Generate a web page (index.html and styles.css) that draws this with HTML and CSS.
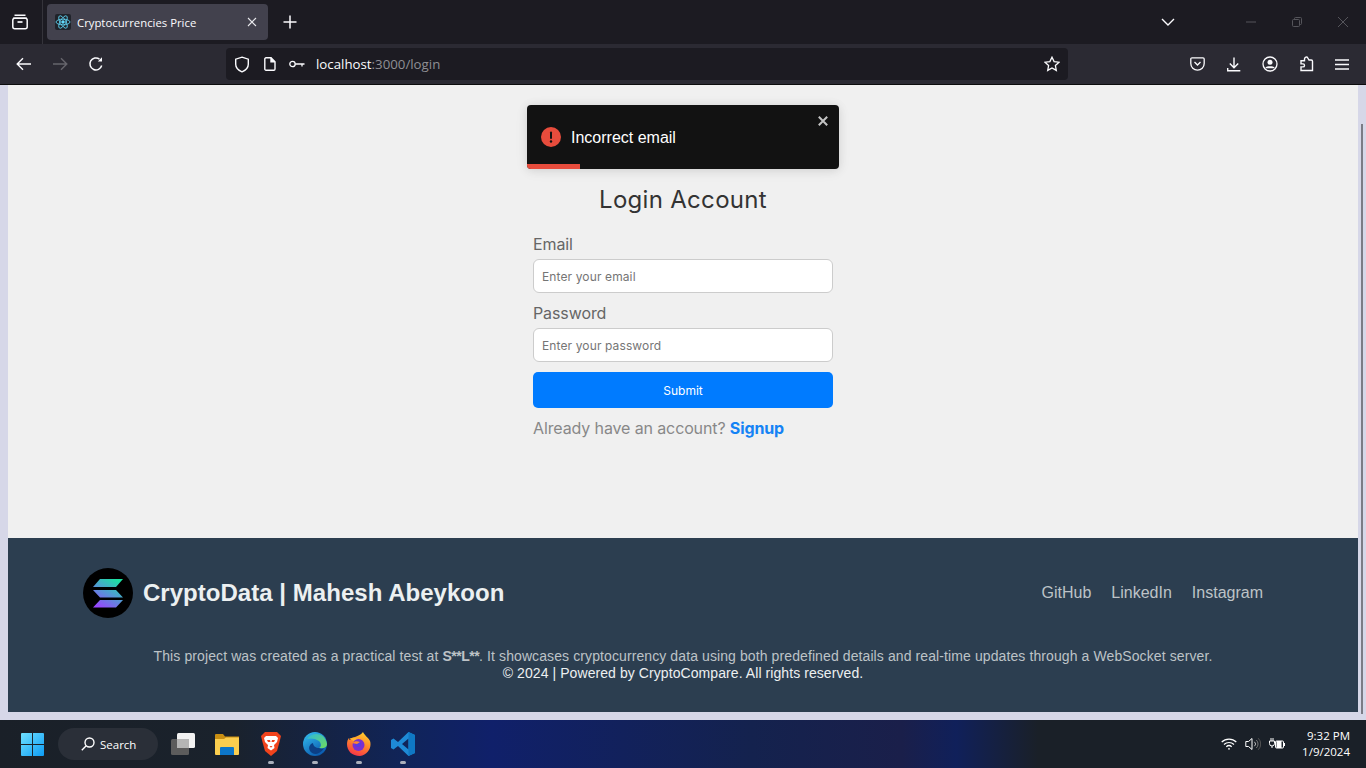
FILE: index.html
```html
<!DOCTYPE html>
<html lang="en">
<head>
<meta charset="utf-8">
<title>Cryptocurrencies Price</title>
<link rel="stylesheet" href="styles.css">
</head>
<body>
<header class="tabbar">
  <div class="tabs-btn">
    <svg width="18" height="18" viewBox="0 0 18 18" fill="none" stroke="#fbfbfe" stroke-width="1.5"><path d="M3.5 2.2h11M2 5.2h14"/><rect x="1.8" y="5.2" width="14.4" height="10.6" rx="2"/><path d="M6.5 9h5" stroke-width="1.7"/></svg>
  </div>
  <div class="tab">
    <span class="favicon">
      <svg width="16" height="16" viewBox="0 0 16 16" fill="none" stroke="#61dafb" stroke-width=".8"><ellipse cx="8" cy="8" rx="7" ry="2.8"/><ellipse cx="8" cy="8" rx="7" ry="2.8" transform="rotate(60 8 8)"/><ellipse cx="8" cy="8" rx="7" ry="2.8" transform="rotate(120 8 8)"/><circle cx="8" cy="8" r="1.3" fill="#61dafb"/></svg>
    </span>
    <span class="tab-title">Cryptocurrencies Price</span>
    <svg class="tab-close" width="10" height="10" viewBox="0 0 10 10" stroke="#e8e8ec" stroke-width="1.1"><path d="M1 1l8 8M9 1l-8 8"/></svg>
  </div>
  <svg class="new-tab" width="14" height="14" viewBox="0 0 14 14" stroke="#fbfbfe" stroke-width="1.5"><path d="M7 .5v13M.5 7h13"/></svg>
  <div class="spacer"></div>
  <svg class="list-tabs" width="14" height="8" viewBox="0 0 14 8" fill="none" stroke="#fbfbfe" stroke-width="1.4"><path d="M1 1l6 6 6-6"/></svg>
  <div class="win-btns">
    <svg width="10" height="10" viewBox="0 0 10 10" stroke="#55555b"><path d="M0 5h10"/></svg>
    <svg width="10" height="10" viewBox="0 0 10 10" fill="none" stroke="#55555b"><rect x=".5" y="2.5" width="7" height="7" rx="1"/><path d="M2.5 2.5V1.500a1 1 0 0 1 1-1h5a1 1 0 0 1 1 1v5a1 1 0 0 1-1 1h-1"/></svg>
    <svg width="10" height="10" viewBox="0 0 10 10" stroke="#55555b"><path d="M0 0l10 10M10 0L0 10"/></svg>
  </div>
</header>

<nav class="toolbar">
  <div class="nav-btns">
    <svg width="16" height="14" viewBox="0 0 16 14" fill="none" stroke="#fbfbfe" stroke-width="1.4"><path d="M15 7H1.500M7 1.200L1.200 7 7 12.800"/></svg>
    <svg width="16" height="14" viewBox="0 0 16 14" fill="none" stroke="#66656c" stroke-width="1.4"><path d="M1 7h13.500M9 1.200L14.800 7 9 12.800"/></svg>
    <svg width="16" height="16" viewBox="0 0 16 16" fill="none" stroke="#fbfbfe" stroke-width="1.5"><path d="M13.700 9.500A6 6 0 1 1 11.500 3.100"/><path d="M14 1.200v4.300H9.800" fill="#fbfbfe" stroke="none"/></svg>
  </div>
  <div class="urlbar">
    <svg class="u-shield" width="16" height="17" viewBox="0 0 16 17" fill="none" stroke="#fbfbfe" stroke-width="1.4"><path d="M8 1.200l6.300 2v5c0 3.700-3.200 6.300-6.300 7.600C4.900 14.500 1.700 11.900 1.700 8.200v-5z"/></svg>
    <svg class="u-page" width="12" height="14" viewBox="0 0 12 14" fill="none" stroke="#fbfbfe" stroke-width="1.4"><path d="M2 .8h5l4 4V12a1.200 1.200 0 0 1-1.200 1.200H2A1.200 1.200 0 0 1 .8 12V2A1.200 1.200 0 0 1 2 .8z"/><path d="M7 .8v4h4" fill="#fbfbfe"/></svg>
    <svg class="u-key" width="16" height="8" viewBox="0 0 16 8" fill="none" stroke="#fbfbfe" stroke-width="1.3"><circle cx="3.500" cy="4" r="2.700"/><path d="M6.200 4H15.500M13 4v2.500"/></svg>
    <span class="url"><span class="url-host">localhost</span>:3000/login</span>
    <svg class="u-star" width="16" height="16" viewBox="0 0 16 16" fill="none" stroke="#fbfbfe" stroke-width="1.3"><path d="M8 1.200l2.100 4.400 4.900.6-3.600 3.300.9 4.900L8 12l-4.300 2.400.9-4.900L1 6.200l4.900-.6z"/></svg>
  </div>
  <div class="tool-icons">
    <svg width="15" height="14" viewBox="0 0 15 14" fill="none" stroke="#fbfbfe" stroke-width="1.300"><path d="M2 .8h11A1.200 1.200 0 0 1 14.200 2v4.500a6.700 6.700 0 0 1-13.400 0V2A1.200 1.200 0 0 1 2 .8z"/><path d="M4.500 5l3 3 3-3"/></svg>
    <svg width="14" height="15" viewBox="0 0 14 15" fill="none" stroke="#fbfbfe" stroke-width="1.400"><path d="M7 .5v10M2.800 6.500L7 10.700l4.200-4.200M.7 11v2.800h12.600"/></svg>
    <svg width="16" height="16" viewBox="0 0 16 16" fill="none" stroke="#fbfbfe" stroke-width="1.300"><circle cx="8" cy="8" r="7"/><circle cx="8" cy="6.200" r="2.500" fill="#fbfbfe" stroke="none"/><path d="M3.500 11.500c1-1.700 8-1.700 9 0v.8h-9z" fill="#fbfbfe" stroke="none"/></svg>
    <svg width="14" height="16" viewBox="0 0 14 16" fill="none" stroke="#fbfbfe" stroke-width="1.400"><path d="M1 4.800h3.500V3a2 2 0 0 1 2.800-1.800L9 4h2.300a1.200 1.200 0 0 1 1.200 1.200v9.300H1v-3.600h2a1.500 1.500 0 0 0 0-3H1z"/></svg>
    <svg width="14" height="11" viewBox="0 0 14 11" stroke="#fbfbfe" stroke-width="1.300"><path d="M0 1h14M0 5.500h14M0 10h14"/></svg>
  </div>
</nav>

<div class="viewport">
  <div class="page">
    <main class="main">
      <div class="toast">
        <svg class="toast-icon" width="20" height="20" viewBox="0 0 20 20"><circle cx="10" cy="10" r="10" fill="#e74c3c"/><rect x="9" y="4.500" width="2" height="7.500" rx="1" fill="#121212"/><circle cx="10" cy="14.500" r="1.200" fill="#121212"/></svg>
        <span class="toast-text">Incorrect email</span>
        <svg class="toast-close" width="10" height="10" viewBox="0 0 10 10" stroke="#c4c4c4" stroke-width="2"><path d="M.8.800l8.400 8.400M9.200.800L.8 9.200"/></svg>
        <div class="toast-bar"></div>
      </div>
      <h1 class="title">Login Account</h1>
      <form class="form">
        <label class="label" for="email">Email</label>
        <input class="input" id="email" type="email" placeholder="Enter your email">
        <label class="label" for="password">Password</label>
        <input class="input" id="password" type="password" placeholder="Enter your password">
        <button class="submit" type="button">Submit</button>
      </form>
      <p class="already">Already have an account? <a class="signup" href="#">Signup</a></p>
    </main>
    <footer class="footer">
      <div class="foot-top">
        <div class="brand">
          <svg class="logo" width="50" height="50" viewBox="0 0 50 50">
            <defs><linearGradient id="sol" x1=".2" y1="1" x2=".8" y2="0"><stop offset="0" stop-color="#9945ff"/><stop offset=".5" stop-color="#5497d5"/><stop offset="1" stop-color="#19e3a0"/></linearGradient></defs>
            <circle cx="25" cy="25" r="25" fill="#000"/>
            <path fill="url(#sol)" d="M17 11h23l-7 8H10zM10 22h23l7 7.500H17zM17 32h23l-7 7.500H10z"/>
          </svg>
          <span class="brand-name">CryptoData | Mahesh Abeykoon</span>
        </div>
        <div class="links"><a href="#">GitHub</a><a href="#">LinkedIn</a><a href="#">Instagram</a></div>
      </div>
      <p class="desc">This project was created as a practical test at <strong>S**L**</strong>. It showcases cryptocurrency data using both predefined details and real-time updates through a WebSocket server.</p>
      <p class="copy">© 2024 | Powered by CryptoCompare. All rights reserved.</p>
    </footer>
  </div>
  <div class="scrollbar"><div class="thumb"></div></div>
</div>

<div class="taskbar">
  <svg class="start" width="23" height="23" viewBox="0 0 24 24">
    <defs><linearGradient id="win" x1="0" y1="0" x2="1" y2="1"><stop offset="0" stop-color="#6fe0ff"/><stop offset="1" stop-color="#0d9cf5"/></linearGradient></defs>
    <path fill="url(#win)" d="M0 1a1 1 0 0 1 1-1h10.500v11.500H0zM12.500 0H23a1 1 0 0 1 1 1v10.500H12.500zM0 12.500h11.500V24H1a1 1 0 0 1-1-1zM12.500 12.500H24V23a1 1 0 0 1-1 1H12.500z"/>
  </svg>
  <div class="search">
    <svg width="14" height="14" viewBox="0 0 14 14" fill="none" stroke="#fff" stroke-width="1.400"><circle cx="8.500" cy="5.500" r="4.500"/><path d="M5.200 8.800L.8 13.200"/></svg>
    <span>Search</span>
  </div>
  <div class="apps">
    <span class="app">
      <svg width="24" height="22" viewBox="0 0 24 22"><rect x="0" y="6" width="18" height="16" rx="1.500" fill="#5c5c5c"/><rect x="6" y="0" width="18" height="15" rx="1.500" fill="#f2f2f2"/><rect x="6" y="6" width="12" height="9" fill="#b5b5b5"/></svg>
    </span>
    <span class="app">
      <svg width="24" height="21" viewBox="0 0 24 21"><path d="M0 1a1 1 0 0 1 1-1h7l2 2.500h14V8H0z" fill="#c98f12"/><path d="M0 5h9l2-1.500h13V20a1 1 0 0 1-1 1H1a1 1 0 0 1-1-1z" fill="#fbce4f"/><path d="M5 14a1 1 0 0 1 1-1h12a1 1 0 0 1 1 1v7H5z" fill="#0c76c9"/></svg>
    </span>
    <span class="app on">
      <svg width="20" height="24" viewBox="0 0 20 24"><path d="M4 0h12l2 2 2 2-1.500 6-2.500 9-6 5-6-5-2.500-9L0 4l2-2z" fill="#f1431c"/><path d="M5 4h10l2 2-1 4-3 3 .5 3-3.500 2.500L6.500 16l.5-3-3-3-1-4z" fill="#fff"/><path d="M6 8h3l.5 2H7zM14 8h-3l-.5 2H13zM8.500 14h3L10 15.800z" fill="#f1431c"/></svg>
    </span>
    <span class="app on">
      <svg width="24" height="24" viewBox="0 0 24 24"><defs><linearGradient id="edge" x1="0" y1="0" x2=".6" y2="1"><stop offset="0" stop-color="#35c1f1"/><stop offset="1" stop-color="#0b5cb0"/></linearGradient><linearGradient id="edge2" x1="0" y1="0" x2="1" y2="1"><stop offset="0" stop-color="#2fb8d8"/><stop offset="1" stop-color="#6fdc5c"/></linearGradient></defs><circle cx="12" cy="12" r="12" fill="url(#edge)"/><path d="M4 7C8 0 22-1 24 12c0 4-5 5-8 4 2-1 3-4 0-7-4-3-9-3-12-2z" fill="url(#edge2)"/><path d="M16 16c-3 0-6-2-6-5-3 1-5 4-3 8 2 3 6 4 9 2 2-1 4-3 5-5-1 1-3 1-5 0z" fill="#0c3f85"/></svg>
    </span>
    <span class="app on">
      <svg width="24" height="24" viewBox="0 0 24 24"><defs><linearGradient id="fox" x1=".7" y1="0" x2=".3" y2="1"><stop offset="0" stop-color="#ffd02e"/><stop offset=".45" stop-color="#ff8a2a"/><stop offset="1" stop-color="#f5304a"/></linearGradient></defs><path d="M16 0c1 3 5 5 7 9 2 6-2 14-10 15C5 24 0 19 0 12c0-3 1-5 2-6 0 1 .5 2 1 2 1-2 3-3 5-3 2-1 6-2 8-5z" fill="url(#fox)"/><path d="M2 6c2 1 6-1 9 1l-3 3z" fill="#ffb52e"/><circle cx="11.500" cy="13" r="6" fill="#7a2fd0"/><circle cx="11" cy="12" r="3" fill="#5b3be0"/><path d="M5 11c3-2 5-2 8-1l-3 2z" fill="#ff8a2a"/></svg>
    </span>
    <span class="app on">
      <svg width="24" height="24" viewBox="0 0 24 24"><path d="M17.500 0L24 3v18l-6.500 3L7 14l-4.500 3.500L0 16V8l2.500-1.500L7 10zM17.500 6.500L11 12l6.500 5.500z" fill="#1e8ad6"/><path d="M17.500 0L24 3v18l-6.500 3z" fill="#0f78c4"/></svg>
    </span>
  </div>
  <div class="spacer"></div>
  <div class="tray">
    <svg width="16" height="12" viewBox="0 0 16 12" fill="none" stroke="#fff" stroke-width="1.200"><path d="M.7 4a10.500 10.500 0 0 1 14.600 0M3 6.500a7.200 7.200 0 0 1 10 0M5.300 8.800a3.900 3.900 0 0 1 5.400 0"/><circle cx="8" cy="10.800" r=".9" fill="#fff" stroke="none"/></svg>
    <svg width="16" height="14" viewBox="0 0 16 14" fill="none" stroke="#fff"><path d="M.8 4.500h2.700L7 1.500v11l-3.500-3H.8z"/><path d="M9.500 4.800a3 3 0 0 1 0 4.400" stroke="#bbb"/><path d="M11.300 3a5.500 5.500 0 0 1 0 8" stroke="#777"/><path d="M13.200 1.200a8 8 0 0 1 0 11.600" stroke="#555"/></svg>
    <svg width="16" height="12" viewBox="0 0 16 12" fill="none" stroke="#fff"><path d="M2 0v3M4 0v3M.5 3h5v2.500a2.500 2.500 0 0 1-5 0zM3 8v2"/><rect x="6.500" y="3" width="8" height="7" rx="1"/><rect x="7.500" y="3" width="5" height="7" fill="#fff" stroke="none"/><path d="M15.500 5v3"/></svg>
  </div>
  <div class="clock"><div>9:32 PM</div><div>1/9/2024</div></div>
</div>
</body>
</html>
```
FILE: styles.css
```css
* { box-sizing: border-box; }
html, body { margin: 0; height: 768px; overflow: hidden; }
body { display: flex; flex-direction: column; width: 1366px; font-family: "Inter", sans-serif; background: #d6d7e8; }
svg { display: block; flex: none; }
.spacer { flex: 1; }

.tabbar { height: 44px; flex: none; background: #1c1b22; display: flex; align-items: center; }
.tabs-btn { width: 43px; height: 44px; display: flex; align-items: center; padding-left: 11px; border-right: 1px solid #35343b; margin-right: 4px; }
.tab { width: 221px; height: 36px; background: #42414d; border-radius: 4px; display: flex; align-items: center; padding: 0 11px 0 8px; }
.favicon { width: 16px; height: 16px; background: #20232a; border-radius: 2px; margin-right: 6px; }
.tab-title { font: 11.330px "Open Sans", sans-serif; color: #fbfbfe; flex: 1; white-space: nowrap; }
.new-tab { margin-left: 15px; }
.list-tabs { margin-right: 71px; }
.win-btns { display: flex; gap: 36px; margin-right: 18px; }

.toolbar { height: 41px; flex: none; background: #2b2a33; border-bottom: 1px solid #0c0c0d; display: flex; align-items: center; }
.nav-btns { display: flex; align-items: center; gap: 20px; width: 226px; padding-left: 16px; }
.urlbar { width: 842px; height: 32px; background: #1c1b22; border-radius: 4px; display: flex; align-items: center; padding-left: 8px; padding-right: 8px; }
.u-page { margin-left: 14px; }
.u-key { margin-left: 13px; }
.url { font: 13.280px "Open Sans", sans-serif; color: #8f8f94; margin-left: 11px; flex: 1; }
.url-host { color: #fbfbfe; }
.tool-icons { display: flex; align-items: center; gap: 21.500px; margin-left: 122px; }

.viewport { height: 635px; flex: none; display: flex; padding-left: 8px; }
.page { width: 1350px; height: 627px; display: flex; flex-direction: column; }
.main { position: relative; height: 453px; flex: none; background: #f0f0f0; display: flex; flex-direction: column; align-items: center; padding-top: 100px; }
.scrollbar { width: 8px; flex: 1; padding: 39px 0 0 3px; }
.thumb { width: 2px; height: 590px; background: #7b7b85; }

.toast { position: absolute; left: 519px; top: 20px; width: 312px; height: 64px; background: #121212; border-radius: 4px; box-shadow: 0 1px 10px rgba(0,0,0,.1), 0 2px 15px rgba(0,0,0,.05); display: flex; align-items: center; padding: 0 14px; overflow: hidden; }
.toast-icon { margin-right: 10px; }
.toast-text { font: 16px "Liberation Sans", sans-serif; color: #fff; padding-top: 2px; }
.toast-close { position: absolute; right: 11px; top: 11px; }
.toast-bar { position: absolute; left: 0; bottom: 0; width: 53px; height: 5px; background: #e74c3c; }

.title { margin: 0; font-size: 24px; font-weight: 400; line-height: 29px; letter-spacing: .3px; color: #333; }
.form { width: 300px; margin-top: 21px; display: flex; flex-direction: column; }
.label { font-size: 16px; line-height: 19px; color: #666; margin-bottom: 5px; letter-spacing: -.1px; }
.input { height: 34px; border: 1px solid #ccc; border-radius: 6px; background: #fff; padding: 0 8px; margin-bottom: 10px; font: 12px "Inter", sans-serif; letter-spacing: .12px; }
.input + .label { margin-top: 1px; }
.input::placeholder { color: #757575; opacity: 1; }
.submit { height: 36px; border: 0; border-radius: 5px; background: #007bff; color: #fff; font: 12px "Inter", sans-serif; }
.already { margin: 11px 0 0; width: 300px; font-size: 16px; line-height: 19px; letter-spacing: -.12px; color: #888; white-space: nowrap; }
.signup { color: #1583f5; font-weight: 700; text-decoration: none; }

.footer { height: 174px; flex: none; background: #2c3e50; padding-top: 30px; font-family: "Liberation Sans", sans-serif; text-align: center; }
.foot-top { display: flex; justify-content: space-between; align-items: center; padding: 0 95px 0 75px; }
.brand { display: flex; align-items: center; gap: 10px; }
.brand-name { font-size: 24px; font-weight: 700; letter-spacing: .03px; color: #ecf0f1; }
.links { display: flex; gap: 20px; font-size: 16px; }
.links a { color: #bdc3c7; text-decoration: none; }
.desc { margin: 30px 0 0; font-size: 14px; line-height: 17px; letter-spacing: .1px; color: #bdc3c7; }
.desc strong { font-weight: 700; letter-spacing: -.5px; }
.copy { margin: 0; font-size: 14px; line-height: 17px; letter-spacing: .075px; color: #ecf0f1; }

.taskbar { height: 48px; flex: none; background: linear-gradient(90deg, #1a2028 0, #1a222c 17%, #10245a 30%, #10206a 36%, #14224e 55%, #1a1f4a 66%, #10205a 70%, #1a2028 76%, #1a2028 100%); display: flex; align-items: center; padding-left: 21px; }
.search { width: 100px; height: 32px; margin-left: 14px; border-radius: 16px; background: #2a2f38; display: flex; align-items: center; gap: 5px; padding-left: 23px; font: 11.500px "Open Sans", sans-serif; color: #fff; }
.apps { display: flex; margin-left: 3px; }
.app { position: relative; width: 44px; height: 48px; display: flex; align-items: center; justify-content: center; }
.app.on::after { content: ""; position: absolute; left: 19px; bottom: 4px; width: 6px; height: 3px; border-radius: 2px; background: #aab0bc; }
.tray { display: flex; align-items: center; gap: 8px; margin-right: 7px; }
.clock { width: 58px; margin-right: 16px; font: 11.500px/16px "Open Sans", sans-serif; color: #fff; text-align: right; }
```
